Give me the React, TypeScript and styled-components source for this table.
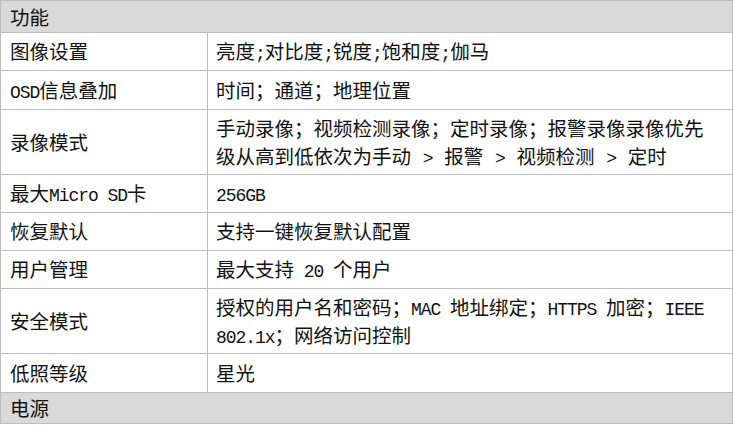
import React from "react";
import styled, { createGlobalStyle } from "styled-components";

const Global = createGlobalStyle`
  html, body { margin: 0; padding: 0; background: #ffffff; }
  body { font-family: "Noto Sans CJK SC", "Liberation Sans", sans-serif; color: #111111; }
`;

const Sheet = styled.div`
  display: grid;
  grid-template-columns: 207px 525px;
  width: 733px;
  border-top: 1px solid #bdbdbd;
  border-left: 1px solid #bdbdbd;
  box-sizing: border-box;
  font-family: "Noto Sans CJK SC", sans-serif;
  font-size: 19.5px;
  line-height: 28px;
  color: #111111;
`;

const Section = styled.div<{ $h: number }>`
  grid-column: 1 / -1;
  box-sizing: border-box;
  height: ${(p) => p.$h}px;
  display: flex;
  align-items: center;
  padding: 0 9px;
  background: #d9d9d9;
  border-right: 1px solid #bdbdbd;
  border-bottom: 1px solid #bdbdbd;
`;

const Cell = styled.div<{ $h: number }>`
  box-sizing: border-box;
  height: ${(p) => p.$h}px;
  display: flex;
  align-items: center;
  padding: 0 4px 0 9px;
  border-right: 1px solid #bdbdbd;
  border-bottom: 1px solid #bdbdbd;
  background: #ffffff;
`;

const Label = styled(Cell)`
  padding-left: 9px;
`;

const Value = styled(Cell)`
  padding-left: 8px;
`;

const Text = styled.span`
  display: block;
  white-space: nowrap;
  line-height: 28.5px;
`;

const Lat = styled.span`
  font-family: "Liberation Mono", monospace;
  font-size: 18px;
  letter-spacing: -1.05px;
  line-height: 1;
`;

const Arrow = styled(Lat)`
  padding: 0 2px;
`;

type Row = { label: React.ReactNode; value: React.ReactNode; h: number };

const rows: Row[] = [
  {
    label: "图像设置",
    h: 38,
    value: (
      <>
        亮度<Lat>;</Lat>对比度<Lat>;</Lat>锐度<Lat>;</Lat>饱和度<Lat>;</Lat>伽马
      </>
    ),
  },
  { label: <><Lat>OSD</Lat>信息叠加</>, h: 39, value: "时间；通道；地理位置" },
  {
    label: "录像模式",
    h: 65,
    value: (
      <>
        手动录像；视频检测录像；定时录像；报警录像录像优先
        <br />
        级从高到低依次为手动<Arrow> &gt; </Arrow>报警<Arrow> &gt; </Arrow>视频检测
        <Arrow> &gt; </Arrow>定时
      </>
    ),
  },
  { label: <>最大<Lat>Micro SD</Lat>卡</>, h: 38, value: <Lat>256GB</Lat> },
  { label: "恢复默认", h: 38, value: "支持一键恢复默认配置" },
  { label: "用户管理", h: 38, value: <>最大支持<Lat> 20 </Lat>个用户</> },
  {
    label: "安全模式",
    h: 65,
    value: (
      <>
        授权的用户名和密码；<Lat>MAC </Lat>地址绑定；<Lat>HTTPS </Lat>加密；<Lat>IEEE</Lat>
        <br />
        <Lat>802.1x</Lat>；网络访问控制
      </>
    ),
  },
  { label: "低照等级", h: 39, value: "星光" },
];

export default function App() {
  return (
    <>
      <Global />
      <Sheet>
        <Section $h={32}>功能</Section>
        {rows.map((r, i) => (
          <React.Fragment key={i}>
            <Label $h={r.h}>
              <Text>{r.label}</Text>
            </Label>
            <Value $h={r.h}>
              <Text>{r.value}</Text>
            </Value>
          </React.Fragment>
        ))}
        <Section $h={31}>电源</Section>
      </Sheet>
    </>
  );
}
